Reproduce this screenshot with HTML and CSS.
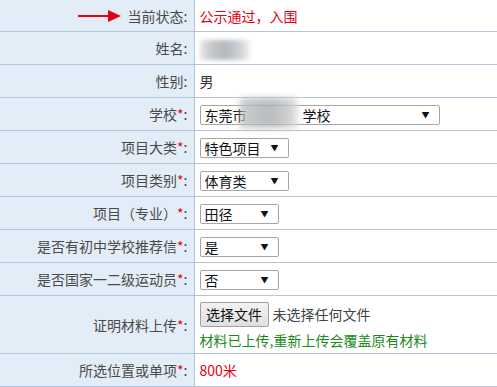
FILE: index.html
```html
<!DOCTYPE html>
<html lang="zh-CN">
<head>
    <meta charset="UTF-8">
    <title>报名信息</title>
    <link rel="stylesheet" href="styles.css">
</head>
<body>

<table class="form-table">
    <colgroup>
        <col class="col-label">
        <col>
    </colgroup>
    <tr class="first">
        <td class="label">
            <svg class="arrow" width="44" height="14" viewBox="0 0 44 14">
                <line x1="0" y1="7" x2="34" y2="7" stroke="#e60012" stroke-width="2"/>
                <polygon points="30,1 43,7 30,13" fill="#e60012"/>
            </svg>当前状态:
        </td>
        <td class="value red">公示通过，入围</td>
    </tr>
    <tr>
        <td class="label">姓名:</td>
        <td class="value"><span class="blur-name"></span></td>
    </tr>
    <tr>
        <td class="label">性别:</td>
        <td class="value">男</td>
    </tr>
    <tr>
        <td class="label">学校<span class="req">*</span>:</td>
        <td class="value">
            <span class="sel sel-school">
                <select><option>东莞市　　　　学校</option></select>
                <span class="blur-school"></span>
            </span>
        </td>
    </tr>
    <tr>
        <td class="label">项目大类<span class="req">*</span>:</td>
        <td class="value"><span class="sel sel-wide"><select><option>特色项目</option></select></span></td>
    </tr>
    <tr>
        <td class="label">项目类别<span class="req">*</span>:</td>
        <td class="value"><span class="sel sel-wide"><select><option>体育类</option></select></span></td>
    </tr>
    <tr>
        <td class="label">项目（专业）<span class="req">*</span>:</td>
        <td class="value"><span class="sel sel-small"><select><option>田径</option></select></span></td>
    </tr>
    <tr>
        <td class="label">是否有初中学校推荐信<span class="req">*</span>:</td>
        <td class="value"><span class="sel sel-small"><select><option>是</option></select></span></td>
    </tr>
    <tr>
        <td class="label">是否国家一二级运动员<span class="req">*</span>:</td>
        <td class="value"><span class="sel sel-small"><select><option>否</option></select></span></td>
    </tr>
    <tr class="upload">
        <td class="label">证明材料上传<span class="req">*</span>:</td>
        <td class="value">
            <div class="file-line">
                <button class="file-btn">选择文件</button>
                <span class="file-name">未选择任何文件</span>
            </div>
            <div class="green">材料已上传,重新上传会覆盖原有材料</div>
        </td>
    </tr>
    <tr>
        <td class="label">所选位置或单项<span class="req">*</span>:</td>
        <td class="value red">800米</td>
    </tr>
</table>

</body>
</html>
```

FILE: styles.css
```css
body {
    margin: 0;
    font-family: "Noto Sans CJK SC", "Liberation Sans", sans-serif;
    font-size: 14px;
    color: #333;
    background: #fff;
}

.form-table {
    width: 100%;
    border-collapse: collapse;
    table-layout: fixed;
}

.col-label {
    width: 194px;
}

.form-table td {
    height: 32px;
    padding: 0;
    border-bottom: 1px solid #b4c4dc;
    vertical-align: middle;
}

.form-table tr.first td {
    height: 31px;
}

.form-table tr.upload td {
    height: 57px;
}

.label {
    background: #e3edf7;
    border-right: 1px solid #b4c4dc;
    text-align: right;
    padding-right: 6px !important;
    color: #4a4a4a;
    white-space: nowrap;
}

.value {
    padding-left: 5px !important;
}

.arrow {
    vertical-align: -1px;
    margin-right: 6px;
}

.req {
    color: #e60012;
}

.red {
    color: #e60012;
}

.green {
    color: #1b8a1b;
    margin-top: 3px;
}

.blur-name {
    display: inline-block;
    width: 50px;
    height: 20px;
    margin-top: 2px;
    background: linear-gradient(90deg, #e6e6e6, #c4c6c8 25%, #b4b8bc 50%, #c8ccd0 75%, #f0f0f0);
    filter: blur(2px);
    vertical-align: middle;
}

.sel {
    position: relative;
    display: inline-block;
    vertical-align: middle;
}

.sel select {
    appearance: none;
    -webkit-appearance: none;
    height: 20px;
    padding: 0 0 0 4px;
    border: 1px solid #a6a6a6;
    border-radius: 2px;
    background: #fff;
    font-family: "Noto Sans CJK SC", sans-serif;
    font-size: 14px;
    line-height: 18px;
    color: #111;
}

.sel::after {
    content: "▼";
    position: absolute;
    right: 10px;
    top: 4px;
    font-size: 8px;
    color: #111;
    pointer-events: none;
}

.sel-school select {
    width: 240px;
}

.sel-wide select {
    width: 89px;
}

.sel-small select {
    width: 79px;
}

.blur-school {
    position: absolute;
    left: 40px;
    top: -7px;
    width: 58px;
    height: 30px;
    background: linear-gradient(90deg, #c0c0c0, #a8acb0 50%, #c0c0c0 80%, #ddd);
    filter: blur(3px);
    opacity: 0.8;
}

.file-line {
    display: flex;
    align-items: center;
    margin-top: 2px;
}

.file-btn {
    height: 25px;
    width: 69px;
    padding: 0;
    border: 1px solid #a0a0a0;
    border-radius: 2px;
    background: linear-gradient(#f2f2f2, #e0e0e0);
    font-family: "Noto Sans CJK SC", sans-serif;
    font-size: 14px;
    color: #111;
}

.file-name {
    margin-left: 4px;
    color: #444;
}
```
